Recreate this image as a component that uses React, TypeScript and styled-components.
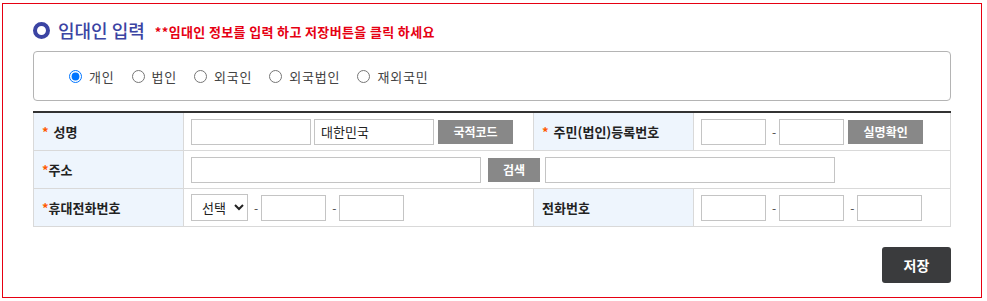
import styled, { createGlobalStyle } from "styled-components";

const GlobalStyle = createGlobalStyle`
  body {
    margin: 0;
    background: #fff;
    font-family: "Noto Sans CJK KR", "Noto Sans", sans-serif;
    color: #222;
  }
`;

const Frame = styled.div`
  box-sizing: border-box;
  margin: 3px 0 0 2px;
  width: 980px;
  height: 295px;
  border: 1px solid #e60012;
  padding: 11px 30px 0 30px;
`;

const TitleRow = styled.div`
  display: flex;
  align-items: center;
  gap: 6px;
  height: 30px;
`;

const Ring = styled.span`
  box-sizing: border-box;
  width: 17px;
  height: 17px;
  border-radius: 50%;
  border: 4px solid #3b44a3;
  margin-right: 2px;
`;

const Title = styled.h2`
  margin: 0;
  font-size: 18px;
  font-weight: 500;
  color: #3b44a3;
  line-height: 24px;
`;

const Notice = styled.span`
  font-size: 13px;
  font-weight: 700;
  letter-spacing: 0.35px;
  color: #e60012;
  margin-left: 4px;
  margin-top: 3px;
`;

const RadioBox = styled.div`
  box-sizing: border-box;
  margin-top: 6px;
  height: 50px;
  border: 1px solid #b4b4b4;
  border-radius: 4px;
  display: flex;
  align-items: center;
  padding-left: 35px;
  gap: 17px;
`;

const RadioLabel = styled.label`
  display: flex;
  align-items: center;
  gap: 7px;
  font-size: 13px;
  letter-spacing: 0.8px;
  color: #444;

  input {
    margin: 0;
    width: 13px;
    height: 13px;
  }
`;

const FormTable = styled.table`
  margin-top: 10px;
  width: 917px;
  border-collapse: collapse;
  border-top: 2px solid #333;
  table-layout: fixed;

  td {
    border: 1px solid #d9d9d9;
    height: 37px;
    padding: 0 0 0 7px;
    font-size: 13px;
  }
`;

const Label = styled.td`
  background: #eef5fd;
  font-weight: 700;
  color: #222;
  && {
    padding-left: 8px;
  }
`;

const Star = styled.span<{ $space?: boolean }>`
  color: #ff5a00;
  margin-right: ${(p) => (p.$space ? "5px" : "0")};
`;

const Cell = styled.div`
  display: flex;
  align-items: center;
`;

const Input = styled.input<{ $w: number }>`
  box-sizing: border-box;
  width: ${(p) => p.$w}px;
  height: 26px;
  border: 1px solid #c4c4c4;
  padding: 0 6px;
  font-family: inherit;
  font-size: 13px;
  color: #222;
  margin-right: 3px;
  outline: none;
`;

const Dash = styled.span`
  font-size: 12px;
  color: #444;
  margin: 0 3px;
`;

const GrayButton = styled.button<{ $w: number; $ml?: number }>`
  box-sizing: border-box;
  width: ${(p) => p.$w}px;
  height: 24px;
  border: none;
  background: #888;
  color: #fff;
  font-family: inherit;
  font-size: 12px;
  font-weight: 700;
  padding: 0;
  margin-left: ${(p) => p.$ml ?? 1}px;
  margin-right: 5px;
`;

const Select = styled.select`
  box-sizing: border-box;
  width: 57px;
  height: 27px;
  border: 1px solid #c4c4c4;
  font-family: inherit;
  font-size: 13px;
  color: #222;
  background: #fff;
  padding: 0 2px 0 6px;
  margin-right: 3px;
`;

const Footer = styled.div`
  display: flex;
  justify-content: flex-end;
  margin-top: 20px;
`;

const SaveButton = styled.button`
  width: 69px;
  height: 36px;
  border: none;
  border-radius: 3px;
  background: #3a3b3d;
  color: #fff;
  font-family: inherit;
  font-size: 14px;
  font-weight: 700;
`;

const types = ["개인", "법인", "외국인", "외국법인", "재외국민"];

export default function App() {
  return (
    <>
      <GlobalStyle />
      <Frame>
        <TitleRow>
          <Ring />
          <Title>임대인 입력</Title>
          <Notice>**임대인 정보를 입력 하고 저장버튼을 클릭 하세요</Notice>
        </TitleRow>
        <RadioBox>
          {types.map((t, i) => (
            <RadioLabel key={t}>
              <input type="radio" name="kind" defaultChecked={i === 0} />
              {t}
            </RadioLabel>
          ))}
        </RadioBox>
        <FormTable>
          <colgroup>
            <col style={{ width: 150 }} />
            <col style={{ width: 350 }} />
            <col style={{ width: 160 }} />
            <col style={{ width: 257 }} />
          </colgroup>
          <tbody>
            <tr>
              <Label>
                <Star $space>*</Star>성명
              </Label>
              <td>
                <Cell>
                  <Input $w={120} />
                  <Input $w={120} defaultValue="대한민국" />
                  <GrayButton $w={75}>국적코드</GrayButton>
                </Cell>
              </td>
              <Label>
                <Star $space>*</Star>주민(법인)등록번호
              </Label>
              <td>
                <Cell>
                  <Input $w={65} />
                  <Dash>-</Dash>
                  <Input $w={65} />
                  <GrayButton $w={75}>실명확인</GrayButton>
                </Cell>
              </td>
            </tr>
            <tr>
              <Label>
                <Star>*</Star>주소
              </Label>
              <td colSpan={3}>
                <Cell>
                  <Input $w={290} />
                  <GrayButton $w={52} $ml={4}>
                    검색
                  </GrayButton>
                  <Input $w={290} />
                </Cell>
              </td>
            </tr>
            <tr>
              <Label>
                <Star>*</Star>휴대전화번호
              </Label>
              <td>
                <Cell>
                  <Select defaultValue="">
                    <option value="">선택</option>
                    <option>010</option>
                    <option>011</option>
                  </Select>
                  <Dash>-</Dash>
                  <Input $w={65} />
                  <Dash>-</Dash>
                  <Input $w={65} />
                </Cell>
              </td>
              <Label>전화번호</Label>
              <td>
                <Cell>
                  <Input $w={65} />
                  <Dash>-</Dash>
                  <Input $w={65} />
                  <Dash>-</Dash>
                  <Input $w={65} />
                </Cell>
              </td>
            </tr>
          </tbody>
        </FormTable>
        <Footer>
          <SaveButton>저장</SaveButton>
        </Footer>
      </Frame>
    </>
  );
}
